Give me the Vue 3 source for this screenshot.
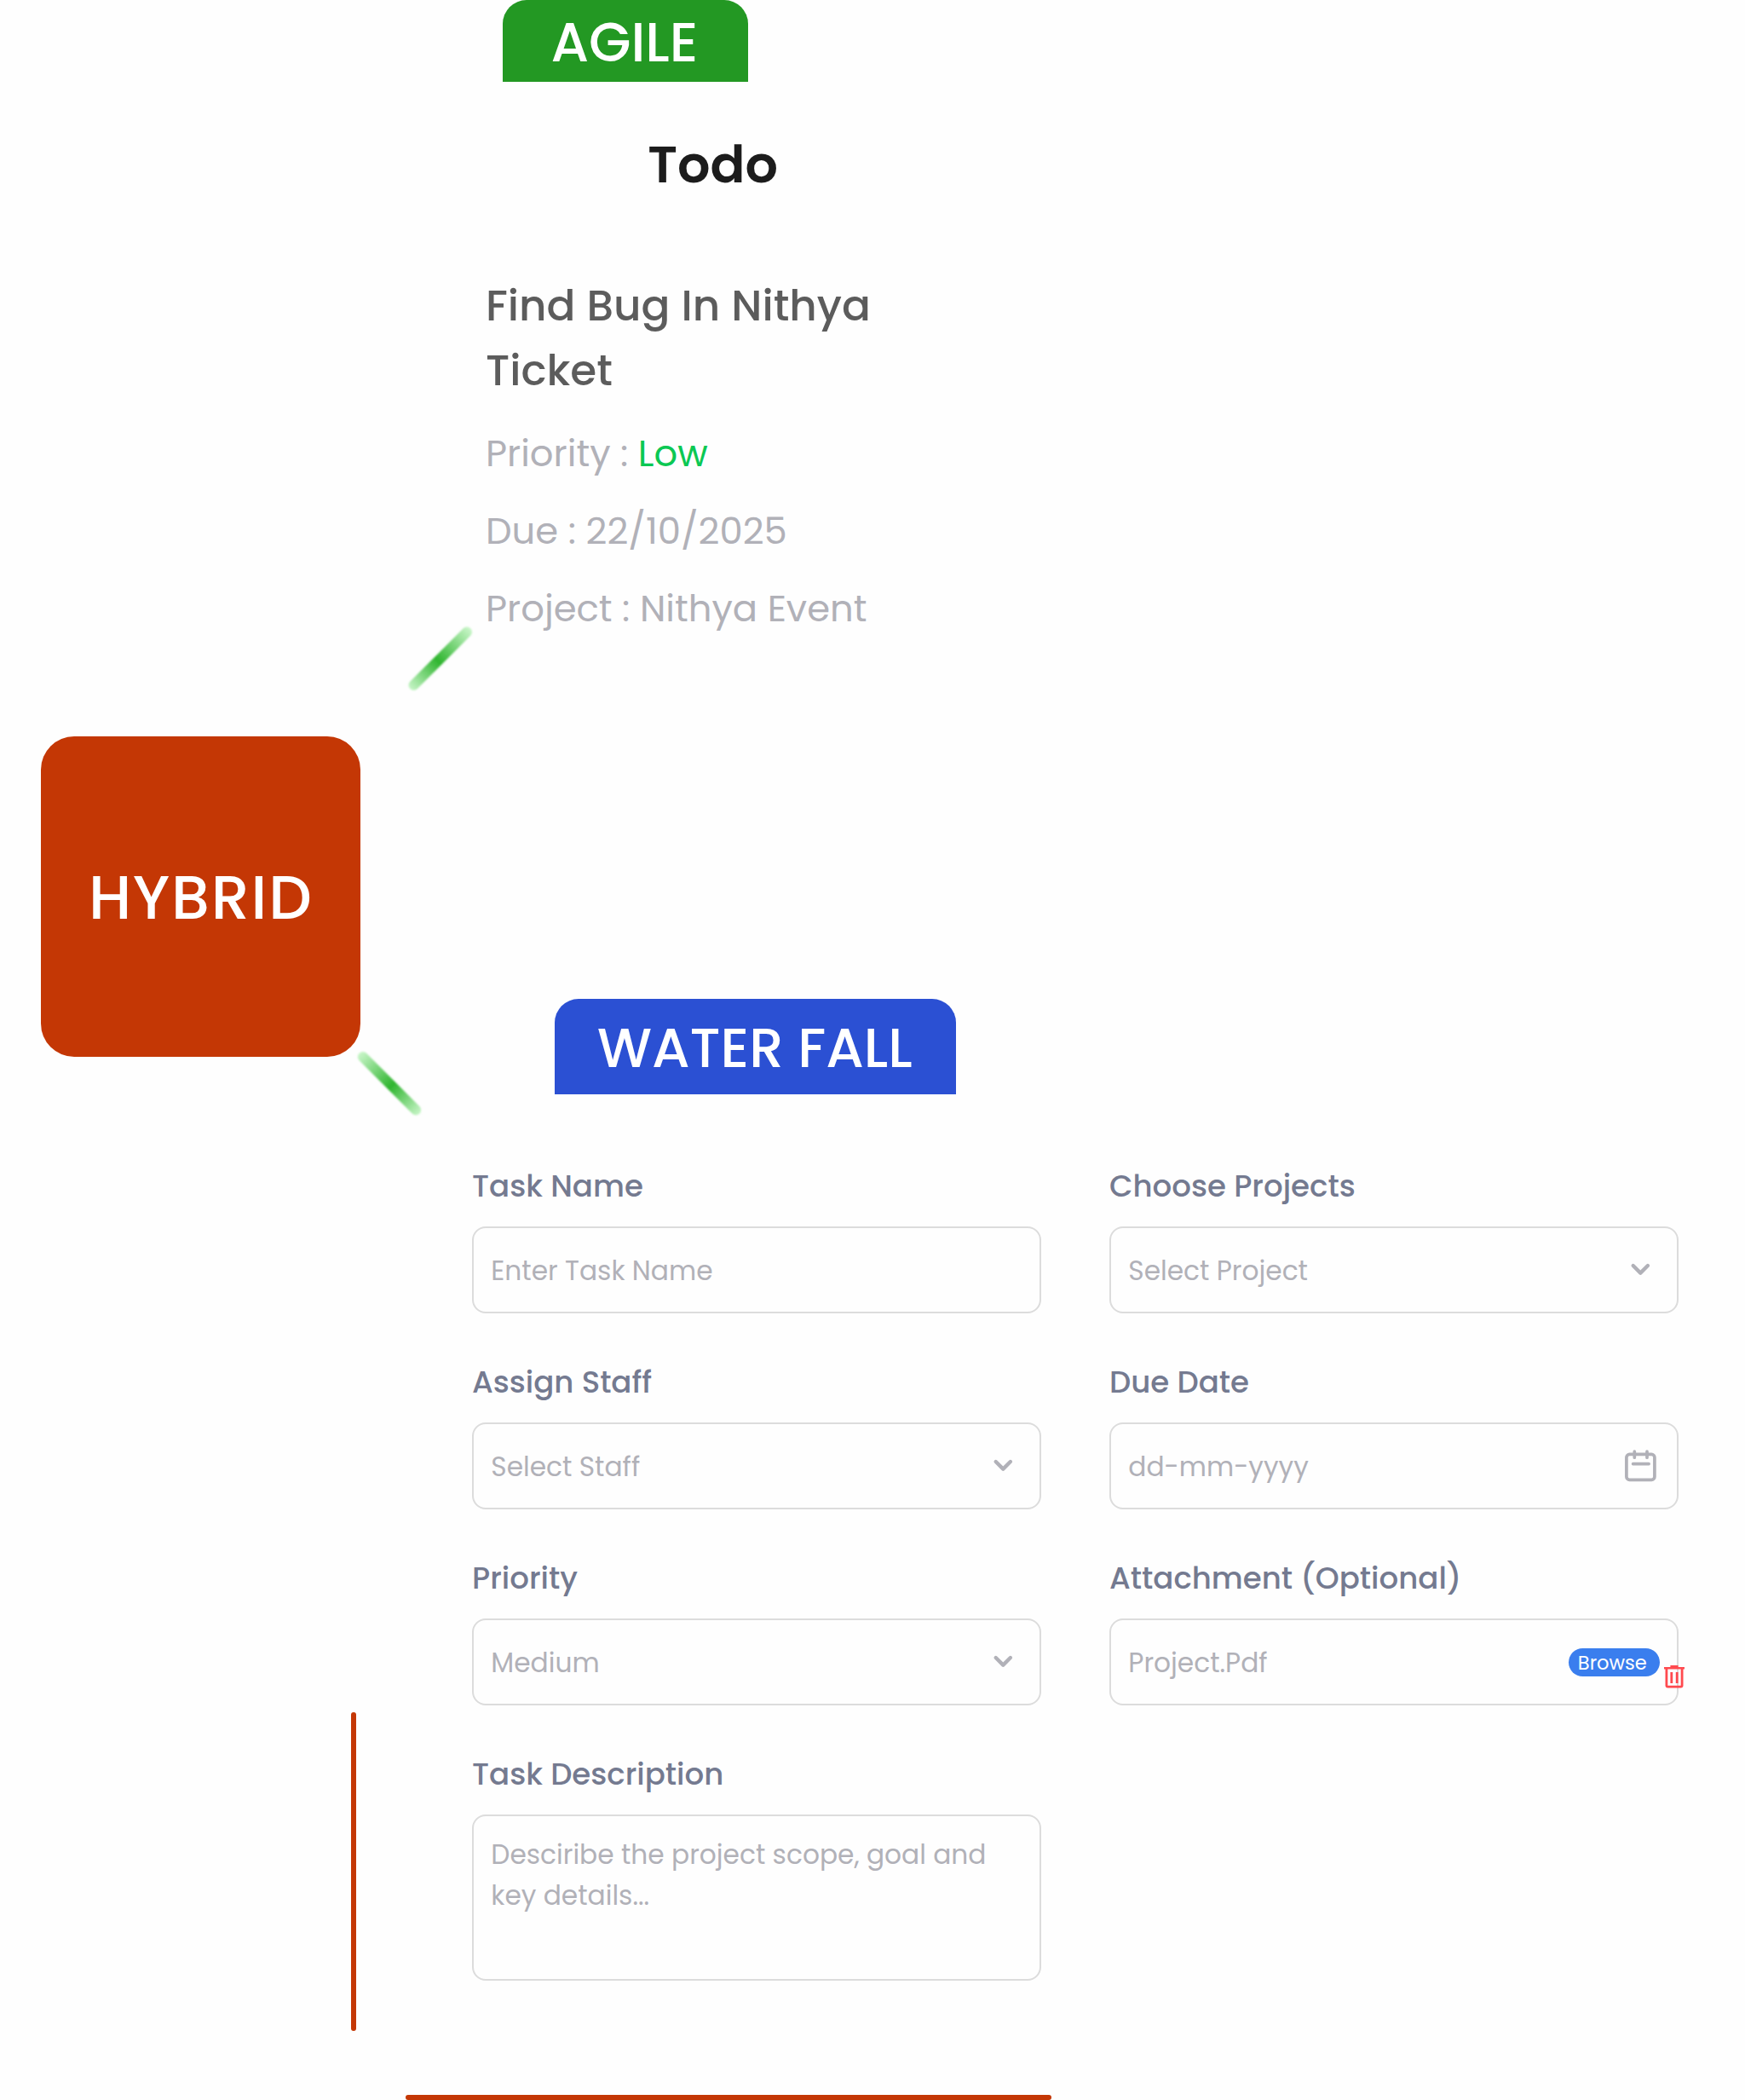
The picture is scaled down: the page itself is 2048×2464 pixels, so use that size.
<script setup>
const meta = [
  { label: 'Priority : ', value: 'Low' },
  { label: 'Due : 22/10/2025' },
  { label: 'Project : Nithya Event' },
]

const fields = [
  { label: 'Task Name', text: 'Enter Task Name' },
  { label: 'Choose Projects', text: 'Select Project', icon: 'chevron' },
  { label: 'Assign Staff', text: 'Select Staff', icon: 'chevron' },
  { label: 'Due Date', text: 'dd-mm-yyyy', icon: 'calendar' },
  { label: 'Priority', text: 'Medium', icon: 'chevron' },
  { label: 'Attachment (Optional)', text: 'Project.Pdf', icon: 'browse' },
]
</script>

<template>
  <div class="page">
    <aside class="side">
      <div class="hybrid">HYBRID</div>
    </aside>

    <main class="main">
      <section class="agile">
        <h2 class="tab tab-agile">AGILE</h2>
        <h3 class="column-title">Todo</h3>
        <article class="ticket">
          <h4 class="ticket-title">Find Bug In Nithya Ticket</h4>
          <p v-for="m in meta" :key="m.label" class="meta">{{ m.label }}<span v-if="m.value" class="low">{{ m.value }}</span></p>
        </article>
      </section>

      <section class="waterfall">
        <h2 class="tab tab-waterfall">WATER FALL</h2>
        <form class="form">
          <div v-for="f in fields" :key="f.label" class="field">
            <label class="label">{{ f.label }}</label>
            <div class="control">
              <span class="placeholder">{{ f.text }}</span>
              <svg v-if="f.icon === 'chevron'" class="icon" viewBox="0 0 44 44">
                <path d="M15.7 17 L24.3 25.6 L32.9 17" stroke-width="4.4" />
              </svg>
              <svg v-else-if="f.icon === 'calendar'" class="icon" viewBox="0 0 44 44">
                <rect x="7.9" y="8.4" width="33" height="29.9" rx="3.6" stroke-width="3.7" />
                <path d="M17.3 5.2 V12.2 M32 5.2 V12.2 M15.6 19.6 H34.1" stroke-width="3.7" />
              </svg>
              <template v-else-if="f.icon === 'browse'">
                <button type="button" class="browse">Browse</button>
                <svg class="trash" viewBox="0 0 24 27">
                  <path d="M0 1.9 H7.4 V0 H16.6 V1.9 H24 V4.6 H0 Z" fill="#ff4a4f" />
                  <path d="M2.9 4 V23.6 Q2.9 25.2 4.5 25.2 H19.5 Q21.1 25.2 21.1 23.6 V4" fill="none" stroke="#ff4a4f" stroke-width="2.8" />
                  <path d="M8.8 8 V21 M15.2 8 V21" stroke="#ff4a4f" stroke-width="2.8" />
                </svg>
              </template>
            </div>
          </div>
          <div class="field">
            <label class="label">Task Description</label>
            <div class="control control-area">Desciribe the project scope, goal and key details...</div>
          </div>
        </form>
      </section>
    </main>

    <svg class="connectors" viewBox="0 0 2048 2464">
      <defs>
        <linearGradient id="beam-up" gradientUnits="userSpaceOnUse" x1="480" y1="808" x2="551" y2="737">
          <stop offset="0" stop-color="#c9f6c9" />
          <stop offset="0.47" stop-color="#2fb52f" />
          <stop offset="1" stop-color="#c9f6c9" />
        </linearGradient>
        <linearGradient id="beam-down" gradientUnits="userSpaceOnUse" x1="422" y1="1236" x2="493" y2="1307">
          <stop offset="0" stop-color="#c9f6c9" />
          <stop offset="0.53" stop-color="#2fb52f" />
          <stop offset="1" stop-color="#c9f6c9" />
        </linearGradient>
        <filter id="soft" x="-30%" y="-30%" width="160%" height="160%">
          <feGaussianBlur stdDeviation="1" />
        </filter>
      </defs>
      <g stroke-width="12" stroke-linecap="round" filter="url(#soft)">
        <path d="M485.5 804 L548 741.6" stroke="url(#beam-up)" />
        <path d="M425.8 1240 L488.2 1302.4" stroke="url(#beam-down)" />
      </g>
      <rect x="412" y="2009" width="6" height="374" rx="3" fill="#c43705" />
      <rect x="476" y="2458" width="758" height="6" rx="3" fill="#c43705" />
    </svg>
  </div>
</template>

<style>
body {
  margin: 0;
  background: #fefefe;
}
</style>

<style scoped>
.page {
  position: relative;
  display: flex;
  width: 2048px;
  height: 2464px;
  overflow: hidden;
  background: #fefefe;
  font-family: Poppins, Inter, "Open Sans", sans-serif;
}

h2,
h3,
h4,
p {
  margin: 0;
}

.side {
  flex: none;
  width: 554px;
  padding: 864px 0 0 48px;
  box-sizing: border-box;
}

.hybrid {
  width: 375px;
  height: 376px;
  box-sizing: border-box;
  padding-left: 56px;
  border-radius: 39px;
  background: #c43705;
  color: #fff;
  font-size: 71.3px;
  font-weight: 500;
  line-height: 378px;
  letter-spacing: 1.8px;
}

.main {
  flex: none;
  width: 1416px;
}

.agile {
  height: 1172px;
}

.tab {
  box-sizing: border-box;
  border-radius: 28px 28px 0 0;
  color: #fff;
  font-size: 64px;
  font-weight: 500;
  white-space: nowrap;
}

.tab-agile {
  width: 287.2px;
  height: 96px;
  margin-left: 36.4px;
  padding-left: 56px;
  background: #239823;
  line-height: 99px;
}

.column-title {
  margin: 52px 0 0 206.2px;
  color: #1c1c1c;
  font-size: 60.4px;
  font-weight: 600;
  line-height: 90px;
}

.ticket {
  width: 480px;
  margin: 83px 0 0 16px;
}

.ticket-title {
  color: #5c5c5c;
  font-size: 50.1px;
  font-weight: 500;
  line-height: 76px;
}

.meta {
  color: #b1b1b8;
  font-size: 43.3px;
  line-height: 91px;
  white-space: pre;
}

.ticket-title + .meta {
  margin-top: 14px;
}

.low {
  color: #0bc853;
}

.tab-waterfall {
  width: 471px;
  height: 112px;
  margin-left: 97.3px;
  padding-left: 49.7px;
  background: #2b50d3;
  line-height: 115px;
}

.form {
  display: grid;
  grid-template-columns: 668px 668px;
  column-gap: 80px;
  row-gap: 55px;
  padding-top: 82px;
}

.field {
  display: flex;
  flex-direction: column;
  gap: 23px;
}

.label {
  height: 50px;
  color: #747a90;
  font-size: 35.6px;
  font-weight: 500;
  line-height: 51px;
  white-space: nowrap;
}

.control {
  position: relative;
  display: flex;
  align-items: center;
  height: 102px;
  box-sizing: border-box;
  padding: 3px 23px 0 20.3px;
  border: 2px solid #dcdcdc;
  border-radius: 16px;
  color: #b1b1b8;
  font-size: 31.25px;
}

.placeholder {
  flex: 1;
  white-space: nowrap;
}

.icon {
  flex: none;
  width: 44px;
  height: 44px;
  margin: -3px 0 0;
  fill: none;
  stroke: #b1b1b8;
  stroke-linecap: round;
  stroke-linejoin: round;
}

.browse {
  flex: none;
  width: 107px;
  height: 33px;
  margin: -3px -2.6px 0 0;
  padding: 0 0 0 11.2px;
  border: 0;
  border-radius: 17px;
  background: #3a7eee;
  color: #fff;
  font: inherit;
  font-size: 22.6px;
  line-height: 34px;
  text-align: left;
}

.trash {
  position: absolute;
  right: -9.2px;
  bottom: 18px;
  width: 24px;
  height: 27px;
}

.control-area {
  display: block;
  height: 195px;
  padding-top: 21px;
  line-height: 48px;
}

.connectors {
  position: absolute;
  inset: 0;
  width: 2048px;
  height: 2464px;
  pointer-events: none;
}
</style>
